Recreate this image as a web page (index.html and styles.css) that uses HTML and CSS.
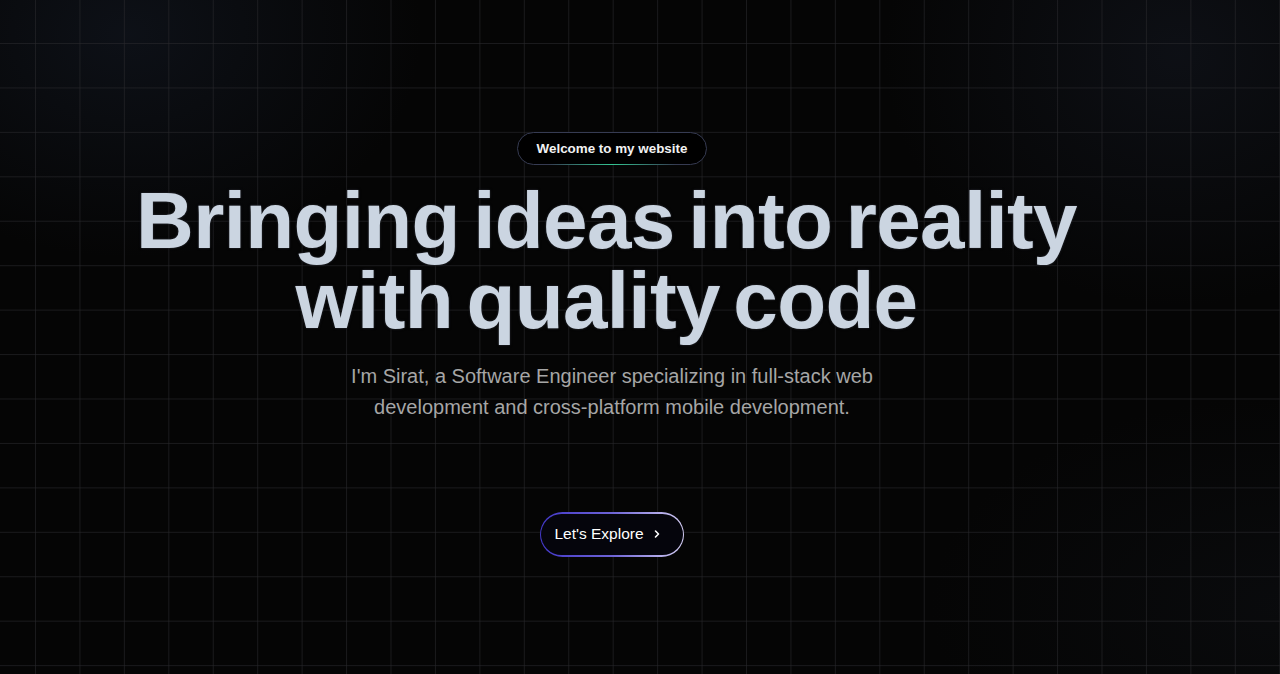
FILE: index.html
```html
<!DOCTYPE html>
<html lang="en">
<head>
<meta charset="utf-8">
<title>Sirat</title>
<link rel="stylesheet" href="styles.css">
</head>
<body>
<div class="page">
  <div class="grid"></div>
  <main class="hero">
    <div class="badge">
      <span class="badge-text">Welcome to my website</span>
      <span class="badge-glow"></span>
    </div>
    <h1 class="title">Bringing ideas into reality<br>with quality code</h1>
    <p class="subtitle">I'm Sirat, a Software Engineer specializing in full-stack web<br>development and cross-platform mobile development.</p>
    <a class="cta" href="#">
      <span class="cta-inner">
        <span>Let's Explore</span>
        <svg class="chev" width="10" height="10" viewBox="0 0 10 10" fill="none"><path d="M3.5 2 L6.5 5 L3.5 8" stroke="#fff" stroke-width="1.6" stroke-linecap="round" stroke-linejoin="round"/></svg>
      </span>
    </a>
  </main>
</div>
</body>
</html>
```
FILE: styles.css
```css
* { box-sizing: border-box; }
html, body { margin: 0; padding: 0; }
body {
  background: #050505;
  font-family: "Liberation Sans", Arial, sans-serif;
  color: #fff;
  overflow: hidden;
}
.page {
  position: relative;
  width: 1280px;
  height: 674px;
  overflow: hidden;
  background:
    radial-gradient(ellipse 420px 320px at 10% 5%, rgba(20,26,38,0.55), rgba(5,5,5,0) 70%),
    radial-gradient(ellipse 420px 360px at 92% 8%, rgba(20,24,34,0.55), rgba(5,5,5,0) 70%),
    radial-gradient(ellipse 500px 300px at 100% 90%, rgba(14,16,20,0.5), rgba(5,5,5,0) 70%),
    #050505;
}
.grid {
  position: absolute;
  inset: 0;
  background-image:
    linear-gradient(to right, rgba(40,40,44,0.6) 1px, transparent 1px),
    linear-gradient(to bottom, rgba(40,40,44,0.6) 1px, transparent 1px);
  background-size: 44.44px 44.44px;
  background-position: 35px 43px;
}
.hero {
  position: relative;
  width: 1224px;
  padding-top: 132px;
  display: flex;
  flex-direction: column;
  align-items: center;
}
.badge {
  position: relative;
  height: 33px;
  padding: 0 19px;
  border: 1px solid #363b52;
  border-radius: 17px;
  background: #000;
  display: flex;
  align-items: center;
}
.badge-text {
  font-size: 13.4px;
  font-weight: 700;
  color: #f2f2f2;
}
.badge-glow {
  position: absolute;
  left: 30px;
  right: 30px;
  bottom: -1px;
  height: 1px;
  background: linear-gradient(to right, rgba(52,211,153,0), rgba(52,211,153,0.9) 50%, rgba(52,211,153,0));
}
.title {
  margin: 16px 0 0;
  padding-right: 11px;
  font-size: 80px;
  line-height: 80px;
  font-weight: 700;
  letter-spacing: -0.65px;
  word-spacing: -8px;
  text-align: center;
  color: #cbd5e1;
  text-shadow: 0 0 1.5px #30333a, 0 0 3px #1a1c20;
}
.subtitle {
  margin: 20px 0 0;
  font-size: 20px;
  line-height: 31px;
  color: #a6a6a6;
  text-align: center;
}
.cta {
  margin-top: 89px;
  display: block;
  padding: 1.5px;
  border-radius: 23px;
  background: linear-gradient(to right, #4338ca, #6d63d6 50%, #d4cdf4);
  text-decoration: none;
}
.cta-inner {
  display: flex;
  align-items: center;
  gap: 8px;
  height: 41.5px;
  padding: 0 21px 0 13px;
  border-radius: 22px;
  background: #05050c;
  color: #fff;
  font-size: 15.5px;
}
.chev { display: block; }
```
